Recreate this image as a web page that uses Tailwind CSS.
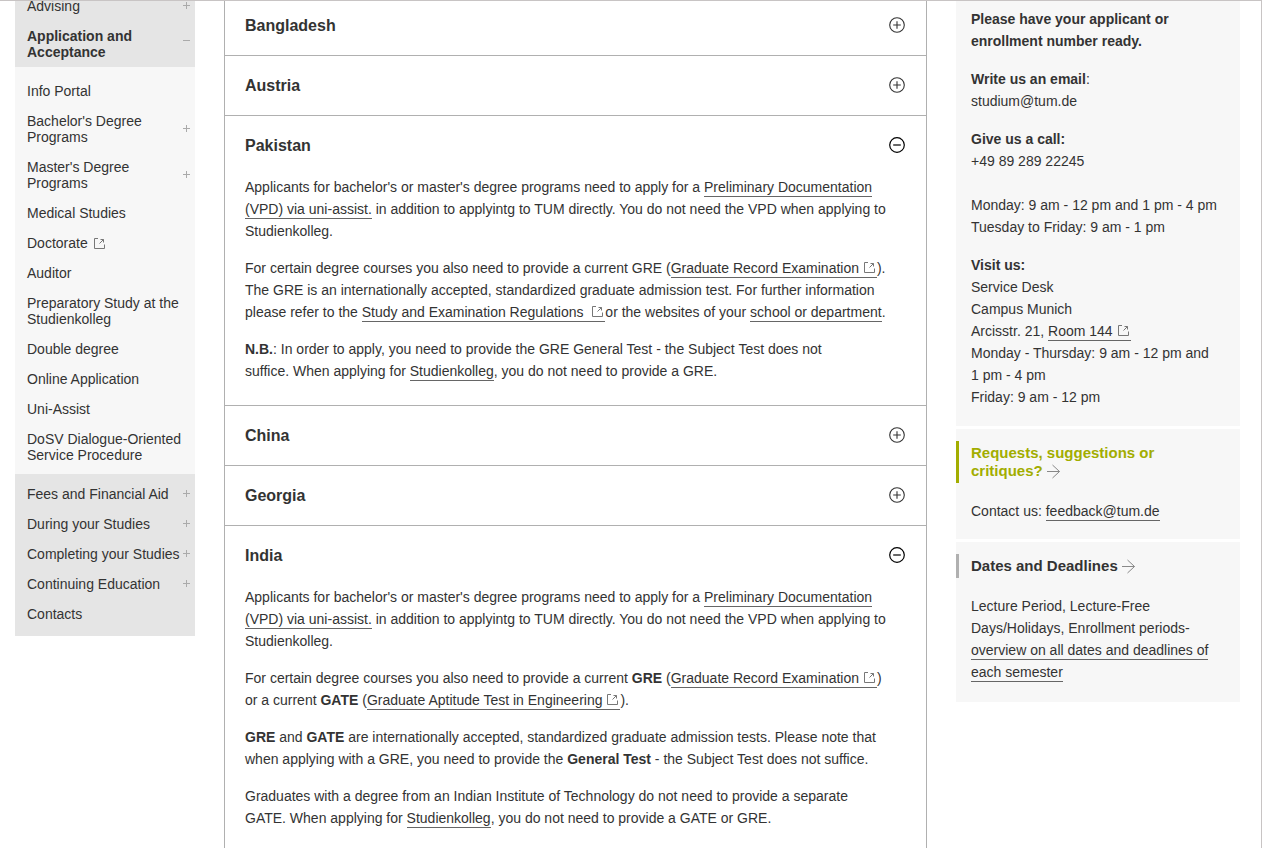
<!DOCTYPE html>
<html lang="en">
<head>
<meta charset="utf-8">
<meta name="viewport" content="width=device-width, initial-scale=1">
<title>Country-specific information</title>
<script src="https://cdn.jsdelivr.net/npm/@tailwindcss/browser@4"></script>
</head>
<body class="bg-white font-['Liberation_Sans',Arial,sans-serif] text-sm text-[#333]">
<svg class="hidden" aria-hidden="true">
  <symbol id="plus" viewBox="0 0 7 7"><path d="M3.5 0v7M0 3.5h7" stroke="currentColor" fill="none"/></symbol>
  <symbol id="minus" viewBox="0 0 7 7"><path d="M0 3.5h7" stroke="currentColor" fill="none"/></symbol>
  <symbol id="open" viewBox="0 0 16 16"><circle cx="8" cy="8" r="7.3" fill="none" stroke="currentColor" stroke-width="1.1"/><path d="M8 4.2v7.6M4.2 8h7.6" stroke="currentColor" stroke-width="1.1"/></symbol>
  <symbol id="close" viewBox="0 0 16 16"><circle cx="8" cy="8" r="7.3" fill="none" stroke="currentColor" stroke-width="1.2"/><path d="M4.2 8h7.6" stroke="currentColor" stroke-width="1.2"/></symbol>
  <symbol id="ext" viewBox="0 0 11 11"><path d="M4 .5H.5v10h10V6.5M6.5 1.500h3v3M9.500 1.500 5.500 5.500" fill="none" stroke="currentColor"/></symbol>
  <symbol id="arrow" viewBox="0 0 14 15"><path d="M0 7.5h12.5M5.500 1l7 6.500-7 6.500" fill="none" stroke="currentColor"/></symbol>
</svg>
<div class="flex min-h-screen items-stretch overflow-hidden border-t border-r border-[#c8c4c4] pl-[15px] pr-[21px]">
  <nav class="w-[180px] shrink-0 leading-4" aria-label="Section">
    <ul class="-mt-[3px] flex flex-col gap-[14px] bg-[#e5e5e5] pb-[7px] pl-3 pr-[5px]">
      <li class="flex items-center justify-between"><a href="#">Advising</a><svg class="mb-[2px] size-[7px] shrink-0 text-[#aaa]"><use href="#plus"/></svg></li>
      <li class="flex items-center justify-between font-bold"><a href="#">Application and<br>Acceptance</a><svg class="mb-2 size-[7px] shrink-0 text-[#aaa]"><use href="#minus"/></svg></li>
    </ul>
    <ul class="flex flex-col gap-[14px] bg-[#f7f7f7] pt-4 pb-[11px] pl-3 pr-[5px]">
      <li><a href="#">Info Portal</a></li>
      <li class="flex items-center justify-between"><a href="#">Bachelor's Degree<br>Programs</a><svg class="mb-[2px] size-[7px] shrink-0 text-[#aaa]"><use href="#plus"/></svg></li>
      <li class="flex items-center justify-between"><a href="#">Master's Degree<br>Programs</a><svg class="mb-[2px] size-[7px] shrink-0 text-[#aaa]"><use href="#plus"/></svg></li>
      <li><a href="#">Medical Studies</a></li>
      <li class="flex items-center gap-[6px]"><a href="#">Doctorate</a><svg class="size-[11px] text-[#777]"><use href="#ext"/></svg></li>
      <li><a href="#">Auditor</a></li>
      <li><a href="#">Preparatory Study at the<br>Studienkolleg</a></li>
      <li><a href="#">Double degree</a></li>
      <li><a href="#">Online Application</a></li>
      <li><a href="#">Uni-Assist</a></li>
      <li><a href="#">DoSV Dialogue-Oriented<br>Service Procedure</a></li>
    </ul>
    <ul class="flex flex-col gap-[14px] bg-[#e5e5e5] pt-3 pb-[14px] pl-3 pr-[5px]">
      <li class="flex items-center justify-between"><a href="#">Fees and Financial Aid</a><svg class="mb-[2px] size-[7px] shrink-0 text-[#aaa]"><use href="#plus"/></svg></li>
      <li class="flex items-center justify-between"><a href="#">During your Studies</a><svg class="mb-[2px] size-[7px] shrink-0 text-[#aaa]"><use href="#plus"/></svg></li>
      <li class="flex items-center justify-between"><a href="#">Completing your Studies</a><svg class="mb-[2px] size-[7px] shrink-0 text-[#aaa]"><use href="#plus"/></svg></li>
      <li class="flex items-center justify-between"><a href="#">Continuing Education</a><svg class="mb-[2px] size-[7px] shrink-0 text-[#aaa]"><use href="#plus"/></svg></li>
      <li><a href="#">Contacts</a></li>
    </ul>
  </nav>

  <main class="mx-[29px] min-w-0 flex-1 border-x border-[#b0b0b0] leading-[22px]">
    <div class="-mt-[6px]">
      <section class="border-t border-[#b0b0b0]">
        <h3><button type="button" class="flex h-[59px] w-full items-center justify-between px-5 pr-[21px] text-base font-bold">Bangladesh<svg class="mb-px size-4"><use href="#open"/></svg></button></h3>
      </section>
      <section class="border-t border-[#b0b0b0]">
        <h3><button type="button" class="flex h-[59px] w-full items-center justify-between px-5 pr-[21px] text-base font-bold">Austria<svg class="mb-px size-4"><use href="#open"/></svg></button></h3>
      </section>
      <section class="border-t border-[#b0b0b0]">
        <h3><button type="button" class="flex h-[59px] w-full items-center justify-between px-5 pr-[21px] text-base font-bold">Pakistan<svg class="mb-px size-4 text-black"><use href="#close"/></svg></button></h3>
        <div class="flex flex-col gap-[15px] px-5 pt-px pb-[23px]">
          <p>Applicants for bachelor's or master's degree programs need to apply for a <a href="#" class="border-b border-[#666] pb-px">Preliminary Documentation<br>(VPD) via uni-assist.</a> in addition to applyintg to TUM directly. You do not need the VPD when applying to<br>Studienkolleg.</p>
          <p>For certain degree courses you also need to provide a current GRE (<a href="#" class="border-b border-[#666] pr-[2px] pb-px">Graduate Record Examination <svg class="ml-px inline size-[11px] align-baseline text-[#777]"><use href="#ext"/></svg></a>).<br>The GRE is an internationally accepted, standardized graduate admission test. For further information<br>please refer to the <a href="#" class="border-b border-[#666] pr-[2px] pb-px">Study and Examination Regulations&nbsp; <svg class="ml-px inline size-[11px] align-baseline text-[#777]"><use href="#ext"/></svg></a>or the websites of your <a href="#" class="border-b border-[#666] pb-px">school or department</a>.</p>
          <p><strong>N.B.</strong>: In order to apply, you need to provide the GRE General Test - the Subject Test does not<br>suffice. When applying for <a href="#" class="border-b border-[#666] pb-px">Studienkolleg</a>, you do not need to provide a GRE.</p>
        </div>
      </section>
      <section class="border-t border-[#b0b0b0]">
        <h3><button type="button" class="flex h-[59px] w-full items-center justify-between px-5 pr-[21px] text-base font-bold">China<svg class="mb-px size-4"><use href="#open"/></svg></button></h3>
      </section>
      <section class="border-t border-[#b0b0b0]">
        <h3><button type="button" class="flex h-[59px] w-full items-center justify-between px-5 pr-[21px] text-base font-bold">Georgia<svg class="mb-px size-4"><use href="#open"/></svg></button></h3>
      </section>
      <section class="border-t border-[#b0b0b0]">
        <h3><button type="button" class="flex h-[59px] w-full items-center justify-between px-5 pr-[21px] text-base font-bold">India<svg class="mb-px size-4 text-black"><use href="#close"/></svg></button></h3>
        <div class="flex flex-col gap-[15px] px-5 pt-px">
          <p>Applicants for bachelor's or master's degree programs need to apply for a <a href="#" class="border-b border-[#666] pb-px">Preliminary Documentation<br>(VPD) via uni-assist.</a> in addition to applyintg to TUM directly. You do not need the VPD when applying to<br>Studienkolleg.</p>
          <p>For certain degree courses you also need to provide a current <strong>GRE</strong> (<a href="#" class="border-b border-[#666] pr-[2px] pb-px">Graduate Record Examination <svg class="ml-px inline size-[11px] align-baseline text-[#777]"><use href="#ext"/></svg></a>)<br>or a current <strong>GATE</strong> (<a href="#" class="border-b border-[#666] pr-[2px] pb-px">Graduate Aptitude Test in Engineering <svg class="ml-px inline size-[11px] align-baseline text-[#777]"><use href="#ext"/></svg></a>).</p>
          <p><strong>GRE</strong> and <strong>GATE</strong> are internationally accepted, standardized graduate admission tests. Please note that<br>when applying with a GRE, you need to provide the <strong>General Test</strong> - the Subject Test does not suffice.</p>
          <p>Graduates with a degree from an Indian Institute of Technology do not need to provide a separate<br>GATE. When applying for <a href="#" class="border-b border-[#666] pb-px">Studienkolleg</a>, you do not need to provide a GATE or GRE.</p>
        </div>
      </section>
    </div>
  </main>

  <aside class="flex w-[284px] shrink-0 flex-col gap-[3px] leading-[22px]">
    <section class="flex flex-col gap-4 bg-[#f7f7f7] px-[15px] pt-[7px] pb-[18px]">
      <p class="font-bold">Please have your applicant or<br>enrollment number ready.</p>
      <p><strong>Write us an email</strong>:<br>studium@tum.de</p>
      <p><strong>Give us a call:</strong><br>+49 89 289 22245<br><br><span class="whitespace-nowrap">Monday: 9 am - 12 pm and 1 pm - 4 pm</span><br>Tuesday to Friday: 9 am - 1 pm</p>
      <p><strong>Visit us:</strong><br>Service Desk<br>Campus Munich<br>Arcisstr. 21, <a href="#" class="border-b border-[#666] pr-[2px] pb-px">Room 144 <svg class="ml-px inline size-[11px] align-baseline text-[#777]"><use href="#ext"/></svg></a><br>Monday - Thursday: 9 am - 12 pm and<br>1 pm - 4 pm<br>Friday: 9 am - 12 pm</p>
    </section>
    <section class="bg-[#f7f7f7] pt-3 pb-[17px]">
      <h3 class="border-l-3 border-[#a2ad00] py-[3px] pl-3 text-[15px] leading-[18px] font-bold text-[#a2ad00]"><a href="#">Requests, suggestions or<br>critiques? <svg class="-mt-px mb-px inline h-[15px] w-[14px] align-middle text-[#888]"><use href="#arrow"/></svg></a></h3>
      <p class="mt-[17px] px-[15px]">Contact us: <a href="#" class="border-b border-[#666] pb-px">feedback@tum.de</a></p>
    </section>
    <section class="bg-[#f7f7f7] pt-3 pb-[19px]">
      <h3 class="border-l-3 border-[#b0b0b0] py-[3px] pl-3 text-[15px] leading-[18px] font-bold"><a href="#">Dates and Deadlines <svg class="-mt-px mb-px inline h-[15px] w-[14px] align-middle text-[#888]"><use href="#arrow"/></svg></a></h3>
      <p class="mt-[17px] px-[15px]">Lecture Period, Lecture-Free<br>Days/Holidays, Enrollment periods-<br><a href="#" class="border-b border-[#666] pb-px">overview on all dates and deadlines of<br>each semester</a></p>
    </section>
  </aside>
</div>
</body>
</html>
